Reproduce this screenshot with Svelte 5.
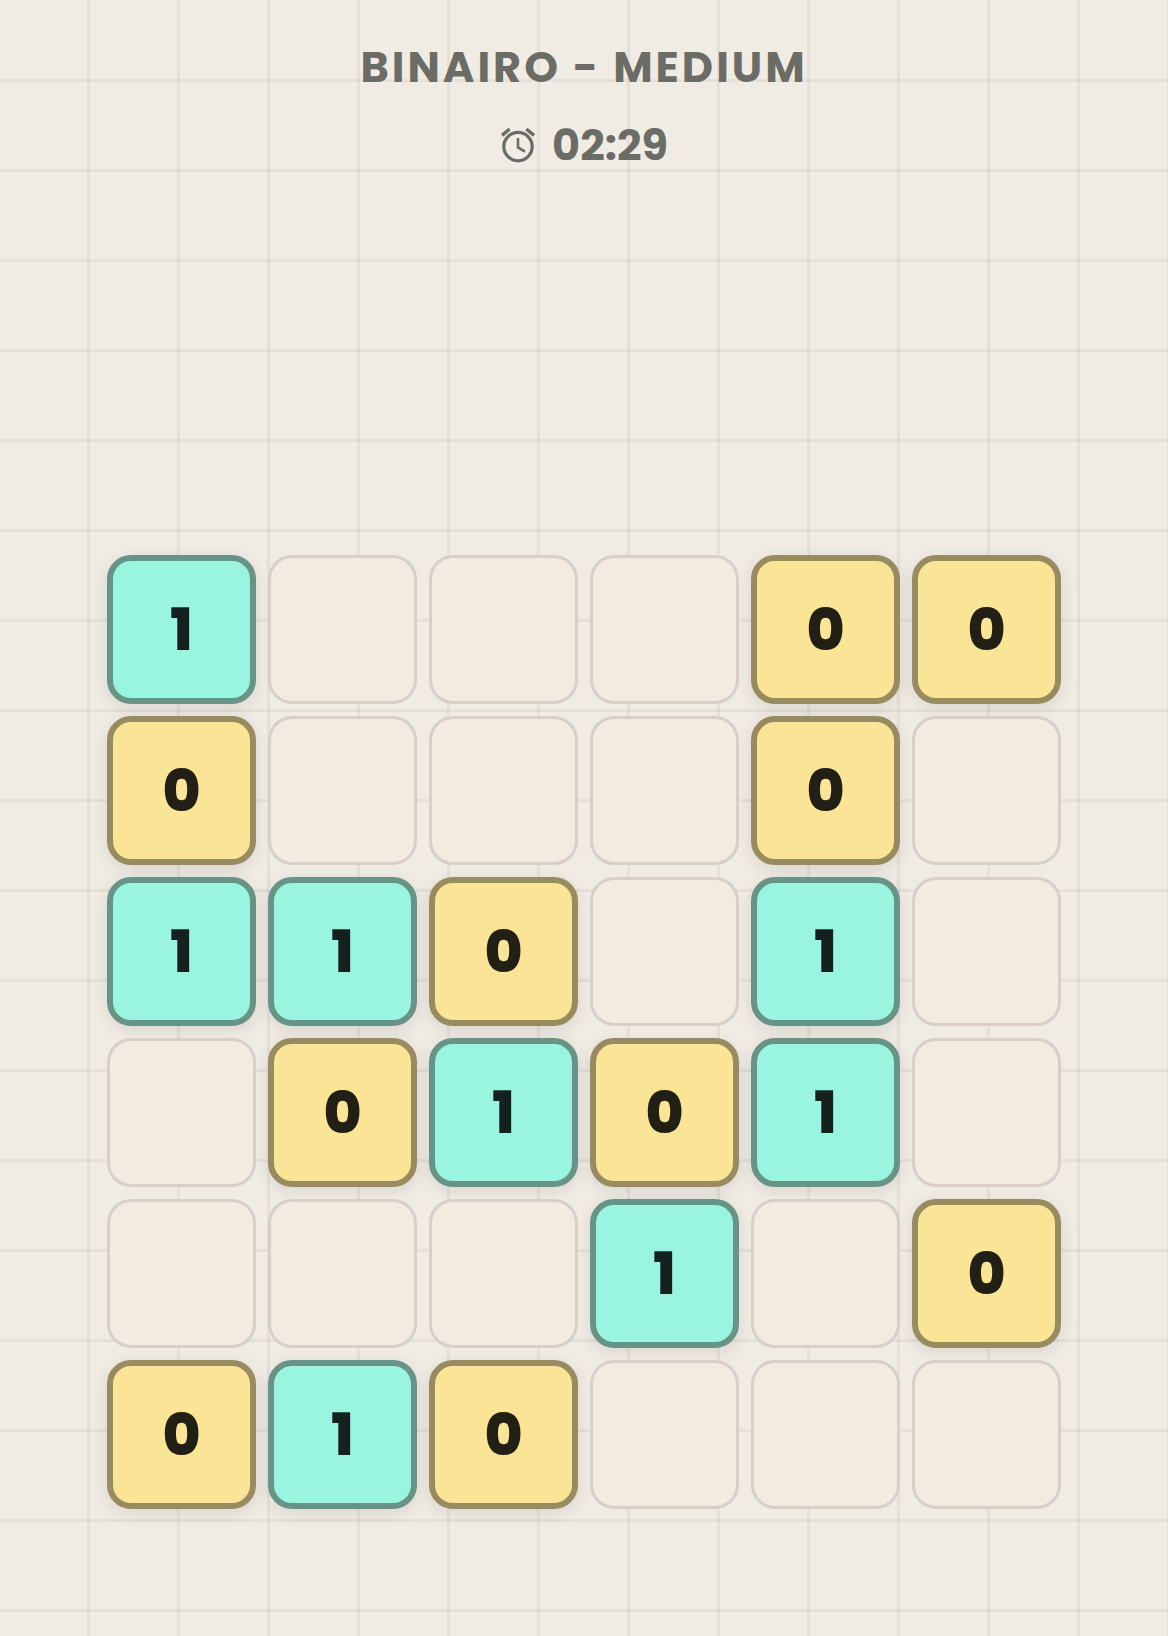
<script>
    const rows = [
        "1...00",
        "0...0.",
        "110.1.",
        ".0101.",
        "...1.0",
        "010...",
    ];

    let seconds = $state(149);
    let cells = $state(
        rows.flatMap((row) =>
            [...row].map((value) => ({
                value: value === "." ? "" : value,
                fixed: value !== ".",
            })),
        ),
    );

    const pad = (n) => String(n).padStart(2, "0");
    let time = $derived(`${pad(Math.floor(seconds / 60))}:${pad(seconds % 60)}`);

    // empty -> 0 -> 1 -> empty
    function cycle(cell) {
        if (cell.fixed) return;
        cell.value = cell.value === "" ? "0" : cell.value === "0" ? "1" : "";
    }
</script>

<main>
    <header>
        <h1>BINAIRO - MEDIUM</h1>
        <div class="timer">
            <svg viewBox="0 0 36 36" fill="none" stroke="currentColor" aria-hidden="true">
                <circle cx="18" cy="19.6" r="14.2" stroke-width="3.2" />
                <path d="M18 11v9.4l7 4.2" stroke-width="2.6" />
                <path d="M2 8.4l7.6-6.4M34 8.4l-7.6-6.4" stroke-width="3.4" />
            </svg>
            <span>{time}</span>
        </div>
    </header>

    <div class="board">
        {#each cells as cell, i}
            <button
                class="cell"
                class:zero={cell.value === "0"}
                class:one={cell.value === "1"}
                aria-label={`Row ${Math.floor(i / 6) + 1}, column ${(i % 6) + 1}: ${cell.value || "empty"}`}
                onclick={() => cycle(cell)}>{cell.value}</button
            >
        {/each}
    </div>
</main>

<style>
    :global(body) {
        background-color: #f0ece4;
    }

    main {
        box-sizing: border-box;
        display: flex;
        flex-direction: column;
        align-items: center;
        min-height: 100vh;
        padding: 39px 24px 127px;
        color: #6c6c67;
        font-family: Poppins, Inter, sans-serif;
        background-image:
            linear-gradient(to right, transparent 87px, rgba(80, 70, 60, 0.07) 87px),
            linear-gradient(to bottom, transparent 87px, rgba(80, 70, 60, 0.07) 87px);
        background-size: 90px 90px;
        background-position: 0 -8px;
    }

    header {
        display: flex;
        flex-direction: column;
        align-items: center;
        gap: 24px;
    }

    h1 {
        margin: 0;
        font-size: 43px;
        font-weight: 700;
        line-height: 56px;
        letter-spacing: 3px;
    }

    .timer {
        display: flex;
        align-items: center;
        gap: 16px;
        font-size: 43px;
        font-weight: 700;
        line-height: 52px;
    }

    .timer svg {
        width: 36px;
        height: 36px;
    }

    .board {
        display: grid;
        grid-template-columns: repeat(6, 1fr);
        gap: 12px;
        width: 100%;
        max-width: 954px;
        margin-top: auto;
    }

    .cell {
        aspect-ratio: 1;
        min-width: 0;
        padding: 0;
        border: 3px solid #d8cfc9;
        border-radius: 24px;
        background: #f3ebe0;
        color: #22201a;
        font-family: inherit;
        font-size: 58px;
        font-weight: 800;
        line-height: 1;
        cursor: pointer;
    }

    .zero,
    .one {
        border-width: 6px;
        box-shadow: 0 4px 16px rgba(60, 50, 60, 0.12);
    }

    .zero {
        border-color: #978b5f;
        background: #fae496;
        color: #221f14;
    }

    .one {
        border-color: #689487;
        background: #99f5e0;
        color: #14211f;
    }
</style>
